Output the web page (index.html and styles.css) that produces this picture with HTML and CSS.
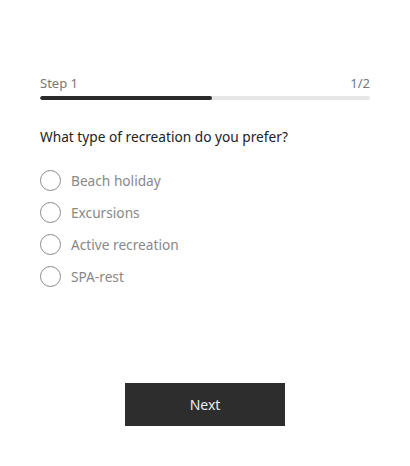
FILE: index.html
```html
<!DOCTYPE html>
<html lang="en">
<head>
  <meta charset="UTF-8">
  <title>Quiz</title>
  <link rel="stylesheet" href="styles.css">
</head>
<body>

<div class="quiz">
  <div class="quiz-head">
    <span>Step 1</span>
    <span>1/2</span>
  </div>
  <div class="progress"><div class="progress-fill"></div></div>

  <p class="question">What type of recreation do you prefer?</p>

  <div class="options">
    <label class="option"><span class="radio"></span>Beach holiday</label>
    <label class="option"><span class="radio"></span>Excursions</label>
    <label class="option"><span class="radio"></span>Active recreation</label>
    <label class="option"><span class="radio"></span>SPA-rest</label>
  </div>

  <div class="actions">
    <button class="next">Next</button>
  </div>
</div>

</body>
</html>
```

FILE: styles.css
```css
html, body {
  margin: 0;
  background: #fff;
  font-family: 'Noto Sans', sans-serif;
  color: #222;
}
.quiz {
  padding: 75px 40px 0;
}
.quiz-head {
  display: flex;
  justify-content: space-between;
  font-size: 13px;
  line-height: 16px;
  color: #777;
}
.progress {
  margin-top: 5px;
  height: 4px;
  border-radius: 2px;
  background: #e6e6e6;
  overflow: hidden;
}
.progress-fill {
  width: 52%;
  height: 100%;
  background: #2b2b2b;
  border-radius: 2px;
}
.question {
  margin: 27px 0 0;
  font-size: 13.7px;
  line-height: 20px;
  color: #222;
}
.options {
  margin-top: 23px;
  display: flex;
  flex-direction: column;
  gap: 11px;
}
.option {
  display: flex;
  align-items: center;
  gap: 10px;
  height: 21px;
  font-size: 13.7px;
  color: #888;
  cursor: pointer;
}
.radio {
  width: 19px;
  height: 19px;
  border: 1px solid #8a8a8a;
  border-radius: 50%;
  flex: none;
}
.actions {
  display: flex;
  justify-content: center;
  margin-top: 96px;
}
.next {
  width: 160px;
  height: 43px;
  border: none;
  background: #2d2d2d;
  color: #eee;
  font-family: 'Noto Sans', sans-serif;
  font-size: 14px;
  cursor: pointer;
}
```
